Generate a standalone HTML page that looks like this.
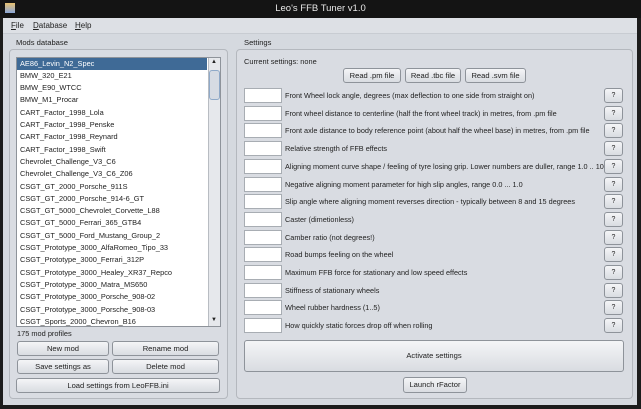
<!DOCTYPE html>
<html><head><style>
*{margin:0;padding:0;box-sizing:border-box}
body{width:641px;height:409px;background:#1c1c1c;font-family:"Liberation Sans",sans-serif;font-size:7.6px;color:#222;position:relative;overflow:hidden}
.a{position:absolute}
.win{left:3px;top:18px;width:634px;height:387px;background:#d5d9df}
.grp{border:1px solid #b4b8be;border-radius:4px;background:#d9dce2}
.btn{position:absolute;border:1px solid #8e939a;border-radius:3px;background:linear-gradient(#f4f5f7,#d9dce1);text-align:center;font-size:7.6px;color:#222}
.tf{position:absolute;left:244px;width:38px;height:15px;background:#fff;border:1px solid #a8adb3}
.lb{position:absolute;left:285px;white-space:nowrap;font-size:7.3px}
.q{position:absolute;left:604px;width:19px;height:15px;border:1px solid #8e939a;border-radius:3px;background:linear-gradient(#f4f5f7,#d9dce1);text-align:center;font-size:7px;line-height:13px}
.row{position:absolute;left:17px;height:12.3px;line-height:12.3px;padding-left:3px;width:190px;white-space:nowrap;font-size:7.4px}
</style></head><body>
<div class="a" style="left:0;top:0;width:641px;height:18px;background:#141414"></div>
<div class="a" style="left:5px;top:3px;width:10px;height:10px;background:linear-gradient(#e8c070,#8aa6d8)"></div>
<div class="a" style="left:0;top:3px;width:641px;text-align:center;color:#e8e8e8;font-size:9.5px">Leo's FFB Tuner v1.0</div>
<div class="a win"></div>
<div class="a" style="left:3px;top:18px;width:634px;height:16px;background:#dde0e5;border-bottom:1px solid #c8ccd2"></div>
<div class="a" style="left:11px;top:21px;font-size:8px"><u>F</u>ile</div>
<div class="a" style="left:33px;top:21px;font-size:8px"><u>D</u>atabase</div>
<div class="a" style="left:75px;top:21px;font-size:8px"><u>H</u>elp</div>
<div class="a" style="left:16px;top:38px;font-size:7.6px">Mods database</div>
<div class="a" style="left:244px;top:38px;font-size:7.6px">Settings</div>
<div class="a grp" style="left:9px;top:49px;width:219px;height:350px"></div>
<div class="a grp" style="left:236px;top:49px;width:397px;height:350px"></div>
<div class="a" style="left:16px;top:57px;width:205px;height:270px;background:#fff;border:1px solid #8e939a;overflow:hidden">
</div>
<div class="a" style="left:208px;top:58px;width:12px;height:268px;background:#e6e8ec;border-left:1px solid #b8bcc2"></div>
<div class="a" style="left:209px;top:70px;width:11px;height:30px;background:#d6dbe3;border:1px solid #8fa9c8;border-radius:3px"></div>
<div class="a" style="left:211px;top:59px;font-size:6px">▲</div>
<div class="a" style="left:211px;top:317px;font-size:6px">▼</div>
<div class="row" style="top:57.5px;background:#3f6a96;color:#fff">AE86_Levin_N2_Spec</div>
<div class="row" style="top:69.8px">BMW_320_E21</div>
<div class="row" style="top:82.1px">BMW_E90_WTCC</div>
<div class="row" style="top:94.4px">BMW_M1_Procar</div>
<div class="row" style="top:106.7px">CART_Factor_1998_Lola</div>
<div class="row" style="top:119px">CART_Factor_1998_Penske</div>
<div class="row" style="top:131.3px">CART_Factor_1998_Reynard</div>
<div class="row" style="top:143.6px">CART_Factor_1998_Swift</div>
<div class="row" style="top:155.9px">Chevrolet_Challenge_V3_C6</div>
<div class="row" style="top:168.2px">Chevrolet_Challenge_V3_C6_Z06</div>
<div class="row" style="top:180.5px">CSGT_GT_2000_Porsche_911S</div>
<div class="row" style="top:192.8px">CSGT_GT_2000_Porsche_914-6_GT</div>
<div class="row" style="top:205.1px">CSGT_GT_5000_Chevrolet_Corvette_L88</div>
<div class="row" style="top:217.4px">CSGT_GT_5000_Ferrari_365_GTB4</div>
<div class="row" style="top:229.7px">CSGT_GT_5000_Ford_Mustang_Group_2</div>
<div class="row" style="top:242px">CSGT_Prototype_3000_AlfaRomeo_Tipo_33</div>
<div class="row" style="top:254.3px">CSGT_Prototype_3000_Ferrari_312P</div>
<div class="row" style="top:266.6px">CSGT_Prototype_3000_Healey_XR37_Repco</div>
<div class="row" style="top:278.9px">CSGT_Prototype_3000_Matra_MS650</div>
<div class="row" style="top:291.2px">CSGT_Prototype_3000_Porsche_908-02</div>
<div class="row" style="top:303.5px">CSGT_Prototype_3000_Porsche_908-03</div>
<div class="row" style="top:315.8px;height:10px;overflow:hidden">CSGT_Sports_2000_Chevron_B16</div>
<div class="a" style="left:17px;top:329px;font-size:7.4px">175 mod profiles</div>
<div class="btn" style="left:17px;top:341px;width:92px;height:15px;line-height:13px">New mod</div>
<div class="btn" style="left:112px;top:341px;width:107px;height:15px;line-height:13px">Rename mod</div>
<div class="btn" style="left:17px;top:359px;width:92px;height:15px;line-height:13px">Save settings as</div>
<div class="btn" style="left:112px;top:359px;width:107px;height:15px;line-height:13px">Delete mod</div>
<div class="btn" style="left:16px;top:378px;width:204px;height:15px;line-height:13px">Load settings from LeoFFB.ini</div>
<div class="a" style="left:244px;top:57px;font-size:7.4px">Current settings: none</div>
<div class="btn" style="left:343px;top:68px;width:58px;height:15px;line-height:13px">Read .pm file</div>
<div class="btn" style="left:405px;top:68px;width:56px;height:15px;line-height:13px">Read .tbc file</div>
<div class="btn" style="left:465px;top:68px;width:61px;height:15px;line-height:13px">Read .svm file</div>

<div class="tf" style="top:88px"></div><div class="lb" style="top:91px">Front Wheel lock angle, degrees (max deflection to one side from straight on)</div><div class="q" style="top:88px">?</div>
<div class="tf" style="top:105.7px"></div><div class="lb" style="top:108.7px">Front wheel distance to centerline (half the front wheel track) in metres, from .pm file</div><div class="q" style="top:105.7px">?</div>
<div class="tf" style="top:123.4px"></div><div class="lb" style="top:126.4px">Front axle distance to body reference point (about half the wheel base) in metres, from .pm file</div><div class="q" style="top:123.4px">?</div>
<div class="tf" style="top:141.1px"></div><div class="lb" style="top:144.1px">Relative strength of FFB effects</div><div class="q" style="top:141.1px">?</div>
<div class="tf" style="top:158.8px"></div><div class="lb" style="top:161.8px">Aligning moment curve shape / feeling of tyre losing grip. Lower numbers are duller, range 1.0 .. 10</div><div class="q" style="top:158.8px">?</div>
<div class="tf" style="top:176.5px"></div><div class="lb" style="top:179.5px">Negative aligning moment parameter for high slip angles, range 0.0 ... 1.0</div><div class="q" style="top:176.5px">?</div>
<div class="tf" style="top:194.2px"></div><div class="lb" style="top:197.2px">Slip angle where aligning moment reverses direction - typically between 8 and 15 degrees</div><div class="q" style="top:194.2px">?</div>
<div class="tf" style="top:211.9px"></div><div class="lb" style="top:214.9px">Caster (dimetionless)</div><div class="q" style="top:211.9px">?</div>
<div class="tf" style="top:229.6px"></div><div class="lb" style="top:232.6px">Camber ratio (not degrees!)</div><div class="q" style="top:229.6px">?</div>
<div class="tf" style="top:247.3px"></div><div class="lb" style="top:250.3px">Road bumps feeling on the wheel</div><div class="q" style="top:247.3px">?</div>
<div class="tf" style="top:265px"></div><div class="lb" style="top:268px">Maximum FFB force for stationary and low speed effects</div><div class="q" style="top:265px">?</div>
<div class="tf" style="top:282.7px"></div><div class="lb" style="top:285.7px">Stiffness of stationary wheels</div><div class="q" style="top:282.7px">?</div>
<div class="tf" style="top:300.4px"></div><div class="lb" style="top:303.4px">Wheel rubber hardness (1..5)</div><div class="q" style="top:300.4px">?</div>
<div class="tf" style="top:318px"></div><div class="lb" style="top:321px">How quickly static forces drop off when rolling</div><div class="q" style="top:318px">?</div>

<div class="btn" style="left:244px;top:340px;width:380px;height:32px;line-height:30px">Activate settings</div>
<div class="btn" style="left:403px;top:377px;width:64px;height:16px;line-height:14px">Launch rFactor</div>
</body></html>
